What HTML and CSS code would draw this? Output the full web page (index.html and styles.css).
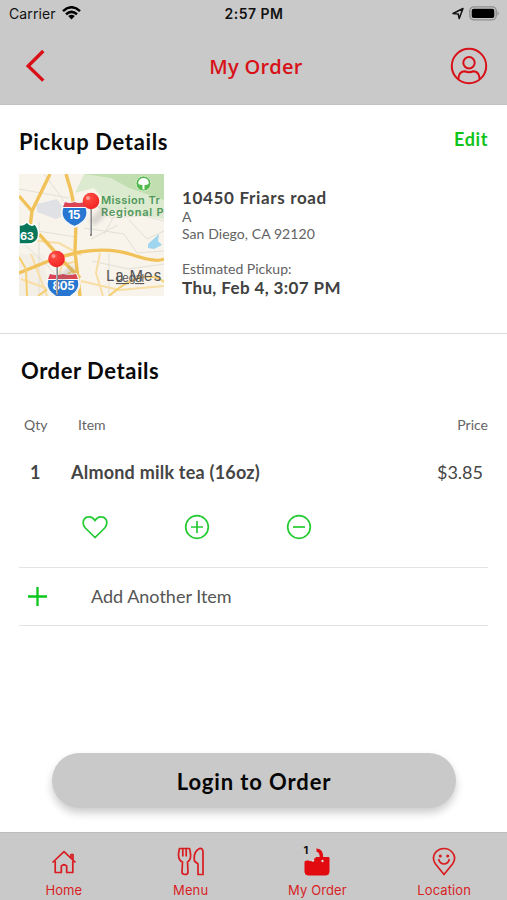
FILE: index.html
```html
<!DOCTYPE html>
<html lang="en">
<head>
<meta charset="utf-8">
<title>My Order</title>
<link rel="stylesheet" href="styles.css">
</head>
<body>
<header class="top">
  <div class="status">
    <div class="carrier"><span>Carrier</span>
      <svg width="19" height="14" viewBox="0 0 19 14" fill="none" stroke="#000" stroke-width="2.5"><path d="M1 5.1Q9.5-2.6 18 5.1M4 8.3Q9.5 3.5 15 8.3"/><path d="M6.2 10.1Q9.5 7.4 12.8 10.1L9.5 13.5Z" fill="#000" stroke="none"/></svg>
    </div>
    <div class="time">2:57 PM</div>
    <div class="power">
      <svg width="12" height="13" viewBox="0 0 12 13" fill="none" stroke="#111" stroke-width="1.5" stroke-linejoin="round"><path d="M1 6.5L11 1.5L7.2 11.5L6.2 7Z"/></svg>
      <svg width="31" height="15" viewBox="0 0 31 15"><rect x=".8" y=".8" width="26.4" height="13" rx="4" fill="none" stroke="#8d8d8d" stroke-width="1.3"/><rect x="2.7" y="2.7" width="22.6" height="9.2" rx="2" fill="#000"/><path d="M28.5 5Q31 7.3 28.5 9.6Z" fill="#8d8d8d"/></svg>
    </div>
  </div>
  <div class="nav">
    <svg class="back" width="20" height="34" viewBox="0 0 20 34" fill="none" stroke="#d81118" stroke-width="3.4"><path d="M18.300 2L3.200 17L18.300 31.600"/></svg>
    <h1>My Order</h1>
    <svg width="38" height="38" viewBox="0 0 38 38" fill="none" stroke="#d81118" stroke-width="2"><circle cx="19" cy="19" r="17.2"/><circle cx="19" cy="15.7" r="5.7"/><path d="M8.5 32V30.5Q9.5 24.5 14.5 24.3Q19 26 23.5 24.3Q28.5 24.5 29.5 30.5V32"/></svg>
  </div>
</header>
<main>
  <section class="pickup">
    <div class="heading"><h2 class="pickup-title">Pickup Details</h2><a class="edit">Edit</a></div>
    <div class="details">
      <svg class="map" width="145" height="122" viewBox="0 0 145 122">
        <defs>
          <filter id="soft" x="-50%" y="-50%" width="200%" height="200%"><feGaussianBlur stdDeviation="2"/></filter>
          <radialGradient id="ball" cx=".35" cy=".3" r=".8"><stop offset="0" stop-color="#ff5147"/><stop offset="1" stop-color="#f01f1f"/></radialGradient>
        </defs>
        <rect width="145" height="122" fill="#f8f4eb"/>
        <path d="M65 0L56 19L75 14L84 25L79 34L145 45V0Z" fill="#dcebcf"/>
        <path d="M65 0L92 4L110 14L145 26V0Z" fill="#c1deb0"/>
        <path d="M18 30L38 25L48 40L37 45L18 38Z" fill="#dfe1e5"/>
        <path d="M0 80H25L30 122H0Z" fill="#f3efe6"/>
        <g fill="none" stroke="#e2dfd5" stroke-width="1"><path d="M0 15L50 24M25 0L48 31M0 54L57 63M20 48V122M65 54L105 60L118 79L145 77M85 60L99 35L145 47M72 65L99 51M73 87L109 95L145 90M5 70L30 93L52 122M90 79V122M110 46L128 65L145 57M75 29L92 44L145 40"/></g>
        <g fill="none" stroke="#f8dda5" stroke-width="2"><path d="M0 65L40 69L62 81M12 80L28 122M34 122L43 91L58 87M62 107L100 116L145 112M81 79L77 99L84 122M2 105L35 117"/></g>
        <g fill="none" stroke="#f0c259" stroke-width="3.4"><path d="M0 22L13 37L31 0M13 37L11 53M20 60L45 88L61 104M47 0L52 17Q55 30 57 47L56 78L61 122M0 99L37 84L61 78Q91 73 114 81T145 85"/></g>
        <g fill="none" stroke="#f5ce70" stroke-width="2"><path d="M0 83L7 95L8 122M90 122Q111 104 125 103T145 108M19 122L52 98"/></g>
        <path d="M129 70L140 60L139 67L143 71L135 75L129 74Z" fill="#9fd5ef"/>
        <circle cx="124.500" cy="9.500" r="7.500" fill="#52b94d" stroke="#d8edca"/>
        <path d="M123.500 15.500V11Q118 11 119.500 7.500Q120.500 4 124.500 4Q129 4 129.500 7.500Q131 11 125.500 11V15.500Z" fill="#fff"/>
        <text class="park" x="82" y="29.500">Mission Tr</text><text class="park second" x="82" y="42">Regional P</text>
        <g><path d="M0 50.500Q4 52 8 48Q12 53 16 50Q21 56 19 64Q17 70 9 70H0Z" fill="#08765a" stroke="#fff" stroke-width="1.500"/><text class="route" x="1" y="65.500" font-size="11">63</text></g>
        <g><path d="M46 28Q51 30 55.500 28Q60 30 65 28Q72 40 64.500 47.500Q61 51 55.500 53Q50 51 46.500 47.500Q39 40 46 28Z" fill="#2676d2" stroke="#f2f4f5" stroke-width="2"/><path d="M46 28Q51 30 55.500 28Q60 30 65 28L67 33H44Z" fill="#dc4353"/><path d="M44 33.500H67" stroke="#fff"/><text class="route" x="49" y="45" font-size="12">15</text></g>
        <g><path d="M31 100Q37 102 44 100Q51 102 57 100Q64 112 56 119L50 124H38L32 119Q24 112 31 100Z" fill="#2676d2" stroke="#f2f4f5" stroke-width="2"/><path d="M31 100Q37 102 44 100Q50 102 57 100L59 105H29Z" fill="#dc4353"/><path d="M29 105.500H59" stroke="#fff"/><text class="route" x="33.500" y="116" font-size="11.500">805</text></g>
        <path d="M73 49L87 35M40 107L55 94" stroke="#777" stroke-width="8" opacity=".25" filter="url(#soft)"/>
        <path d="M72 33V62M38 92V121" stroke="#8b8b8b" stroke-width="2"/><path d="M71.500 33V60M37.500 92V119" stroke="#ccc" stroke-width=".7"/>
        <circle cx="72" cy="27" r="8.300" fill="url(#ball)"/><circle cx="69" cy="24" r="2" fill="#ff9b91"/><circle cx="37.500" cy="85" r="8.300" fill="url(#ball)"/><circle cx="34.500" cy="82" r="2" fill="#ff9b91"/>
        <text class="city" x="87" y="107">La Mes</text><text class="legal" x="97" y="108">Legal</text>
      </svg>
      <div class="address">
        <strong class="street">10450 Friars road</strong><span class="unit">A</span><span class="town">San Diego, CA 92120</span>
        <span class="estimate">Estimated Pickup:</span><strong class="when">Thu, Feb 4, 3:07 PM</strong>
      </div>
    </div>
  </section>
  <section class="order">
    <h2 class="order-title">Order Details</h2>
    <div class="labels"><span class="qty-label">Qty</span><span class="item-label">Item</span><span class="price-label">Price</span></div>
    <div class="item"><strong>1</strong><strong class="item-name">Almond milk tea (16oz)</strong><span class="price">$3.85</span></div>
    <div class="actions">
      <svg width="26" height="24" viewBox="0 0 26 24"><path d="M13 22.500L3.300 13C-.5 8.500 1 2 6.800 1.800C10 1.500 12 4 13 5.500C14 4 16 1.500 19.200 1.800C25 2 26.500 8.500 22.700 13Z"/></svg>
      <svg width="26" height="26" viewBox="0 0 26 26"><circle cx="13" cy="13" r="11.300"/><path d="M7 13H19M13 7V19"/></svg>
      <svg width="26" height="26" viewBox="0 0 26 26"><circle cx="13" cy="13" r="11.300"/><path d="M7 13H19"/></svg>
    </div>
    <div class="add"><svg width="19" height="19" viewBox="0 0 19 19"><path d="M0 9.500H19M9.500 0V19" stroke="#0bc61b" stroke-width="2.300"/></svg><span>Add Another Item</span></div>
  </section>
</main>
<button class="login"><span>Login to Order</span></button>
<nav class="tabs">
  <a><svg width="26" height="24" viewBox="0 0 26 24"><path d="M1.500 12.500L13 1.700L24.500 12.500M4.200 11V22.500H10.300V16Q13 13.500 15.700 16V22.500H21.800V11M20 8V4.500H22V10"/></svg><span class="home-label">Home</span></a>
  <a><svg width="28" height="29" viewBox="0 0 28 29"><path d="M2.500 1.500H12.500Q15.500 12.500 10.500 15L11 25Q11 27.500 8 27.500T5 25L5.500 15Q-.5 12.500 2.500 1.500ZM5.800 2V9.500M9.200 2V9.500M26 27.500H21V17L17.500 14Q16 5 22.500 1.500Q26 1 26 5Z"/></svg><span class="menu-label">Menu</span></a>
  <a><svg width="28" height="29" viewBox="0 0 28 29"><path class="solid" d="M2 14.500Q5 13 8 15Q11 13 13 10.500H26V25Q26 28 23 28H5Q2 28 2 25Z"/><path class="straw" d="M13.500 3.300Q18.500 3 18.500 11"/><circle cx="10" cy="13.500" r="1.300" class="hole"/><circle cx="19.500" cy="14" r="1.200" class="hole"/></svg><b class="badge">1</b><span class="order-label">My Order</span></a>
  <a><svg width="24" height="29" viewBox="0 0 24 29"><path d="M12 27.500L3.500 17Q-1 10 4.200 4.700Q7.500 1.500 12 1.500Q17 1.500 20 5Q25 10.500 20.500 17ZM6.500 12Q8 17 12 17T17.500 12"/><circle cx="8.300" cy="9" r=".7"/><circle cx="15.700" cy="9" r=".7"/></svg><span class="location-label">Location</span></a>
</nav>
</body>
</html>
```
FILE: styles.css
```css
* { box-sizing: border-box; }
body { margin: 0; height: 900px; display: flex; flex-direction: column; overflow: hidden; background: #fff; color: #454545; font-family: Lato, "Open Sans", sans-serif; }
svg { display: block; flex: none; }
h1, h2 { margin: 0; white-space: nowrap; }
span, strong { white-space: nowrap; }
.top { height: 105px; background: #c9c9c9; border-bottom: 1px solid #c3c3c3; }
.status { height: 28px; display: grid; grid-template-columns: 1fr 80px 1fr; align-items: center; padding: 0 7px 0 9px; font: 14px/16px Inter, sans-serif; color: #111; }
.status > div { position: relative; }
.carrier { display: flex; align-items: center; gap: 6px; letter-spacing: .1px; padding-bottom: 1px; }
.carrier svg { margin-bottom: 1px; }
.time { font-weight: 600; text-align: center; white-space: nowrap; letter-spacing: .5px; padding: 0 1px 1px 0; }
.power { display: flex; justify-content: flex-end; align-items: center; gap: 5px; padding-bottom: 2px; }
.nav { height: 76px; display: flex; align-items: center; justify-content: space-between; padding: 0 19px 0 25px; color: #d81118; }
h1 { font: 600 20px "Open Sans", sans-serif; letter-spacing: .25px; margin-left: 17px; }
.pickup { height: 229px; border-bottom: 1px solid #dcdcdc; padding: 23px 19px 0 19px; }
.heading { height: 46px; display: flex; justify-content: space-between; }
h2 { font-size: 22px; line-height: 28px; color: #090909; font-weight: 700; }
.pickup-title { letter-spacing: .65px; }
.edit { color: #10c41c; font-size: 18px; line-height: 23px; font-weight: 700; letter-spacing: .6px; }
.details { display: flex; gap: 18px; }
.address { display: flex; flex-direction: column; padding-top: 14px; font-size: 14px; line-height: 17px; color: #626262; }
.address strong { font-size: 17px; line-height: 20px; color: #414141; }
.address .street { letter-spacing: .66px; }
.address .when { letter-spacing: .38px; line-height: 22px; }
.town { letter-spacing: .07px; }
.estimate { margin-top: 18px; }
.map text { font-family: Inter, sans-serif; }
.map .park { font-size: 11px; font-weight: 600; fill: #51985b; letter-spacing: .4px; }
.map .second { letter-spacing: .75px; }
.map .route { fill: #fff; font-weight: 700; letter-spacing: -.3px; }
.map .city { font-size: 15px; fill: #555; letter-spacing: .8px; }
.map .legal { font-size: 11px; fill: #555; text-decoration: underline; }
.order { padding: 23px 19px 0; }
.order-title { padding-left: 2px; letter-spacing: .55px; }
.labels { display: grid; grid-template-columns: 54px 1fr auto; margin-top: 30px; padding-left: 5px; font-size: 14px; line-height: 20px; color: #646464; }
.item { display: grid; grid-template-columns: 41px 1fr auto; margin-top: 26px; padding: 0 5px 0 11px; font-size: 18px; line-height: 22px; }
.item-name { letter-spacing: .22px; }
.actions { display: flex; align-items: center; gap: 76px; height: 26px; margin: 31px 0 0 63px; }
.actions svg { fill: none; stroke: #24ca32; stroke-width: 1.7; }
.add { height: 59px; margin-top: 27px; border: solid #e3e3e3; border-width: 1px 0; display: flex; align-items: center; gap: 44px; padding: 0 0 1px 9px; font-size: 18px; color: #555; }
.add span { line-height: 20px; }
.login { width: 404px; height: 55px; margin: auto 0 24px 52px; flex: none; border: 0; border-radius: 28px; background: #c9c9c9; box-shadow: 0 5px 9px #0003; color: #050505; font: 700 22px Lato, sans-serif; letter-spacing: .88px; padding-top: 3px; }
.tabs { height: 68px; flex: none; display: grid; grid-template-columns: repeat(4, 1fr); background: #c9c9c9; border-top: 1px solid #bdbdbd; color: #d82326; }
.tabs a { display: flex; flex-direction: column; align-items: center; justify-content: flex-end; gap: 5px; padding: 0 0 2px 1px; position: relative; font: 13px/16px Inter, sans-serif; letter-spacing: .1px; }
.tabs svg { fill: none; stroke: #d81c20; stroke-width: 1.7; stroke-linejoin: round; margin-bottom: 1px; }
.tabs a:first-child svg { margin-bottom: 3px; }
.tabs .solid { fill: #e10b10; stroke: #e10b10; stroke-width: 1; }
.tabs .straw { stroke: #e10b10; stroke-width: 3.5; }
.tabs .hole { fill: #ddd; stroke: none; }
.badge { position: absolute; left: 50px; top: 9px; color: #111; font: 700 11px/16px Inter, sans-serif; }
```
